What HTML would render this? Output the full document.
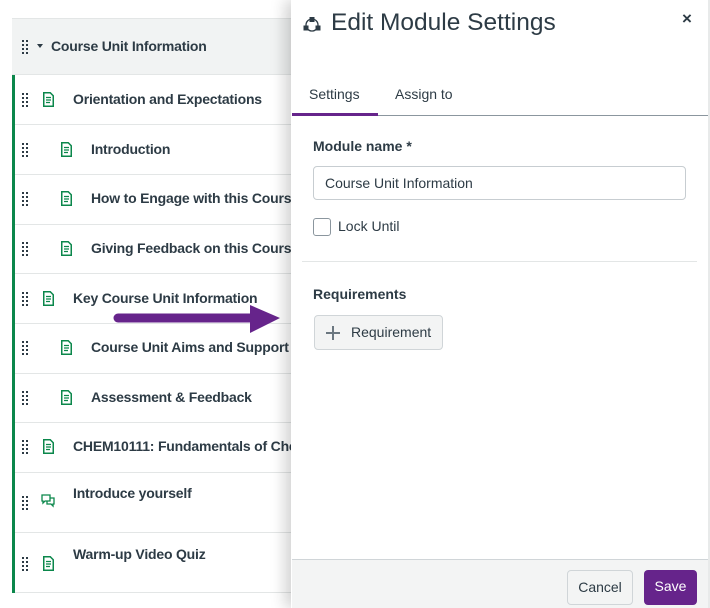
<!DOCTYPE html>
<html><head><meta charset="utf-8"><style>
*{box-sizing:border-box;margin:0;padding:0}
body{width:710px;height:608px;background:#fff;font-family:"Liberation Sans",sans-serif;color:#2d3b45;position:relative;overflow:hidden}
.abs{position:absolute}
.list{left:12px;top:18px;width:290px;height:576px;border-top:1px solid #e3e6e6}
.hdr{left:12px;top:19px;width:290px;height:56px;background:#f1f3f3;border-bottom:1px solid #e3e6e6}
.green{left:12px;top:75px;width:3px;height:518px;background:#0b874b}
.row{position:absolute;left:15px;width:280px;border-bottom:1px solid #e3e6e6}
.drag{position:absolute;width:6px;height:14px;background-image:linear-gradient(#2d3b45,#2d3b45);background-size:2px 2px;background-repeat:no-repeat;
background:
linear-gradient(#2d3b45,#2d3b45) 0 0/2px 2px no-repeat,
linear-gradient(#2d3b45,#2d3b45) 4px 0/2px 2px no-repeat,
linear-gradient(#2d3b45,#2d3b45) 0 4px/2px 2px no-repeat,
linear-gradient(#2d3b45,#2d3b45) 4px 4px/2px 2px no-repeat,
linear-gradient(#2d3b45,#2d3b45) 0 8px/2px 2px no-repeat,
linear-gradient(#2d3b45,#2d3b45) 4px 8px/2px 2px no-repeat,
linear-gradient(#2d3b45,#2d3b45) 0 12px/2px 2px no-repeat,
linear-gradient(#2d3b45,#2d3b45) 4px 12px/2px 2px no-repeat}
.t{position:absolute;font-size:14px;font-weight:bold;white-space:nowrap;letter-spacing:-0.2px}
.ic{position:absolute;width:11px;height:15px}
.panel{left:291px;top:0;width:419px;height:608px;background:#fff;box-shadow:-6px 0 14px rgba(0,0,0,0.18);border-right:2px solid #e8eaea}
</style></head><body>
<svg width="0" height="0" style="position:absolute"><symbol id="pg" viewBox="0 0 11 15"><path d="M0.75 0.75h6.5l3 3v10.5h-9.5z" fill="none" stroke="#0b874b" stroke-width="1.5"/><path d="M3 5.5h5M3 8h5M3 10.5h4" stroke="#0b874b" stroke-width="1.2"/></symbol></svg>
<div class="abs list"></div>
<div class="abs hdr"></div>
<div class="drag" style="left:22px;top:40px"></div>
<div class="abs" style="left:37px;top:44px;width:0;height:0;border-left:3px solid transparent;border-right:3px solid transparent;border-top:4px solid #2d3b45"></div>
<div class="t" style="left:51px;top:38px">Course Unit Information</div>
<div class="abs green"></div>

<div class="row" style="top:75px;height:50px"></div>
<div class="row" style="top:125px;height:50px"></div>
<div class="row" style="top:175px;height:50px"></div>
<div class="row" style="top:225px;height:49px"></div>
<div class="row" style="top:274px;height:50px"></div>
<div class="row" style="top:324px;height:50px"></div>
<div class="row" style="top:374px;height:49px"></div>
<div class="row" style="top:423px;height:50px"></div>
<div class="row" style="top:473px;height:60px"></div>
<div class="row" style="top:533px;height:60px"></div>

<div class="drag" style="left:22px;top:93px"></div><svg class="ic" style="left:43px;top:92px"><use href="#pg"/></svg><div class="t" style="left:73px;top:91px">Orientation and Expectations</div>
<div class="drag" style="left:22px;top:143px"></div><svg class="ic" style="left:61px;top:142px"><use href="#pg"/></svg><div class="t" style="left:91px;top:141px">Introduction</div>
<div class="drag" style="left:22px;top:192px"></div><svg class="ic" style="left:61px;top:191px"><use href="#pg"/></svg><div class="t" style="left:91px;top:190px">How to Engage with this Course</div>
<div class="drag" style="left:22px;top:242px"></div><svg class="ic" style="left:61px;top:241px"><use href="#pg"/></svg><div class="t" style="left:91px;top:240px">Giving Feedback on this Course</div>
<div class="drag" style="left:22px;top:292px"></div><svg class="ic" style="left:43px;top:291px"><use href="#pg"/></svg><div class="t" style="left:73px;top:290px">Key Course Unit Information</div>
<div class="drag" style="left:22px;top:341px"></div><svg class="ic" style="left:61px;top:340px"><use href="#pg"/></svg><div class="t" style="left:91px;top:339px">Course Unit Aims and Support</div>
<div class="drag" style="left:22px;top:391px"></div><svg class="ic" style="left:61px;top:390px"><use href="#pg"/></svg><div class="t" style="left:91px;top:389px">Assessment &amp; Feedback</div>
<div class="drag" style="left:22px;top:440px"></div><svg class="ic" style="left:43px;top:439px"><use href="#pg"/></svg><div class="t" style="left:73px;top:438px">CHEM10111: Fundamentals of Chemistry</div>
<div class="drag" style="left:22px;top:496px"></div>
<svg class="abs" style="left:41px;top:493px" width="15" height="15" viewBox="0 0 15 15" fill="none" stroke="#0b874b" stroke-width="1.3"><path d="M1 2h8v6H4l-2 2V8H1z"/><path d="M9 5h4v6h-1v2l-2-2H6V8"/></svg>
<div class="t" style="left:73px;top:485px">Introduce yourself</div>
<div class="drag" style="left:22px;top:557px"></div><svg class="ic" style="left:43px;top:556px"><use href="#pg"/></svg><div class="t" style="left:73px;top:546px">Warm-up Video Quiz</div>

<svg class="abs" style="left:110px;top:300px" width="175" height="38"><line x1="8" y1="18" x2="145" y2="18" stroke="#66248b" stroke-width="9" stroke-linecap="round"/><polygon points="140,5 170,18 140,33" fill="#66248b"/></svg>

<div class="abs panel"></div>
<svg class="abs" style="left:302px;top:16px" width="20" height="16" viewBox="0 0 20 16"><circle cx="10" cy="9" r="6" fill="none" stroke="#2d3b45" stroke-width="1.3"/><rect x="7.5" y="1" width="5" height="5" fill="#2d3b45"/><rect x="1.5" y="9.5" width="5" height="5" fill="#2d3b45"/><rect x="13.5" y="9.5" width="5" height="5" fill="#2d3b45"/></svg>
<div class="abs" style="left:331px;top:9px;font-size:24.5px">Edit Module Settings</div>
<div class="abs" style="left:682px;top:9px;font-size:17px;font-weight:bold">×</div>
<div class="abs" style="left:309px;top:86px;font-size:14px">Settings</div>
<div class="abs" style="left:395px;top:86px;font-size:14px">Assign to</div>
<div class="abs" style="left:292px;top:115px;width:416px;height:1px;background:#8b969e"></div>
<div class="abs" style="left:292px;top:113px;width:86px;height:3px;background:#66248b"></div>
<div class="abs" style="left:313px;top:138px;font-size:14px;font-weight:bold">Module name *</div>
<div class="abs" style="left:313px;top:166px;width:373px;height:34px;border:1px solid #c7cdd1;border-radius:4px;font-size:14px;padding:8px 11px">Course Unit Information</div>
<div class="abs" style="left:313px;top:218px;width:18px;height:18px;border:1px solid #8b969e;border-radius:3px"></div>
<div class="abs" style="left:338px;top:218px;font-size:14px">Lock Until</div>
<div class="abs" style="left:302px;top:261px;width:395px;height:1px;background:#e3e6e6"></div>
<div class="abs" style="left:313px;top:286px;font-size:14px;font-weight:bold">Requirements</div>
<div class="abs" style="left:314px;top:315px;width:129px;height:35px;background:#f3f4f4;border:1px solid #d0d5d8;border-radius:4px;font-size:14px;padding:8px 0 0 36px">Requirement</div>
<div class="abs" style="left:326px;top:332px;width:14px;height:1.5px;background:#6b7780"></div>
<div class="abs" style="left:332.3px;top:325.5px;width:1.5px;height:14px;background:#6b7780"></div>
<div class="abs" style="left:292px;top:559px;width:416px;height:49px;background:#f3f4f4;border-top:1px solid #d0d5d8"></div>
<div class="abs" style="left:567px;top:570px;width:66px;height:35px;background:#f3f4f4;border:1px solid #d0d5d8;border-radius:4px;font-size:14px;text-align:center;line-height:33px">Cancel</div>
<div class="abs" style="left:644px;top:570px;width:53px;height:35px;background:#66248b;border-radius:4px;color:#fff;font-size:14px;text-align:center;line-height:33px">Save</div>
</body></html>
